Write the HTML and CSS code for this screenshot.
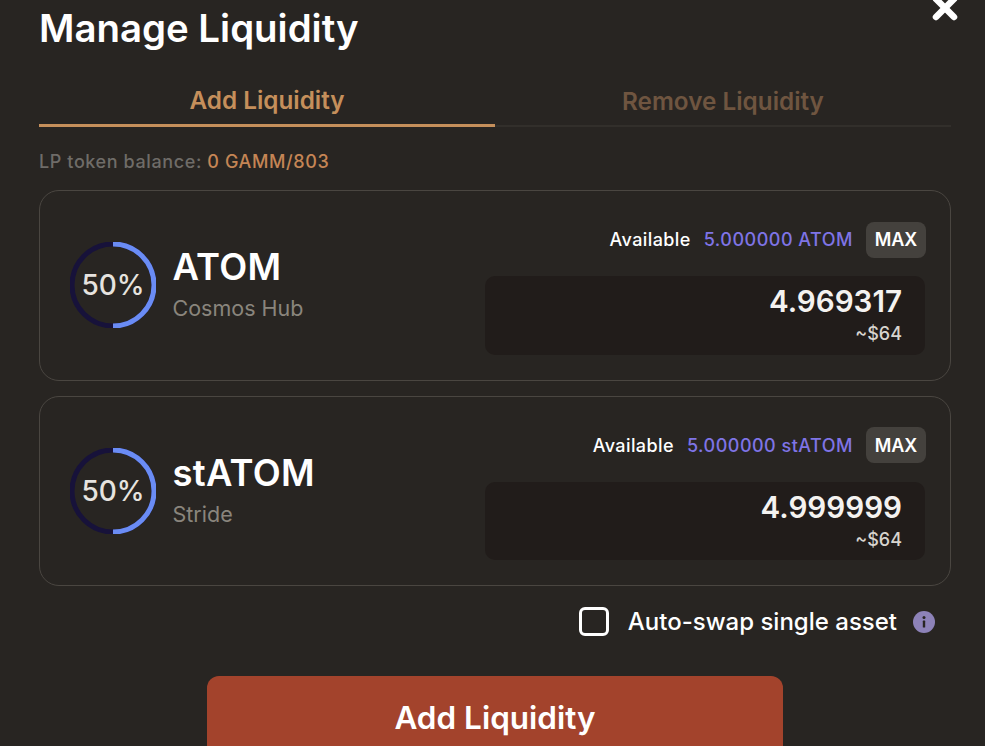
FILE: index.html
```html
<!DOCTYPE html>
<html lang="en">
<head>
<meta charset="utf-8">
<title>Manage Liquidity</title>
<link rel="stylesheet" href="styles.css">
</head>
<body>
<main class="modal">
  <svg class="close" viewBox="0 0 26 26" aria-hidden="true"><path d="M4 4 L22 22 M22 4 L4 22"/></svg>
  <h1 class="title">Manage Liquidity</h1>
  <div class="tabs">
    <div class="tab active">Add Liquidity</div>
    <div class="tab">Remove Liquidity</div>
  </div>
  <p class="balance">LP token balance: <span class="balance-val">0 GAMM/803</span></p>
  <section class="card">
    <div class="asset">
      <div class="ring">
        <svg viewBox="0 0 86 86" aria-hidden="true"><circle class="ring-bg" cx="43" cy="43" r="41"/><path class="ring-fg" d="M43 2 A41 41 0 0 1 43 84"/></svg>
        <span class="pct">50%</span>
      </div>
      <div class="names">
        <div class="sym">ATOM</div>
        <div class="chain">Cosmos Hub</div>
      </div>
    </div>
    <div class="amounts">
      <div class="avail">
        <span class="avail-label">Available</span>
        <span class="avail-val">5.000000 ATOM</span>
        <button class="max">MAX</button>
      </div>
      <div class="input">
        <div class="amount">4.969317</div>
        <div class="usd">~$64</div>
      </div>
    </div>
  </section>
  <section class="card">
    <div class="asset">
      <div class="ring">
        <svg viewBox="0 0 86 86" aria-hidden="true"><circle class="ring-bg" cx="43" cy="43" r="41"/><path class="ring-fg" d="M43 2 A41 41 0 0 1 43 84"/></svg>
        <span class="pct">50%</span>
      </div>
      <div class="names">
        <div class="sym">stATOM</div>
        <div class="chain">Stride</div>
      </div>
    </div>
    <div class="amounts">
      <div class="avail">
        <span class="avail-label">Available</span>
        <span class="avail-val">5.000000 stATOM</span>
        <button class="max">MAX</button>
      </div>
      <div class="input">
        <div class="amount">4.999999</div>
        <div class="usd">~$64</div>
      </div>
    </div>
  </section>
  <div class="autoswap">
    <span class="check"></span>
    <span class="autoswap-label">Auto-swap single asset</span>
    <svg class="info" viewBox="0 0 22 22" aria-hidden="true"><circle cx="11" cy="11" r="11"/><rect class="info-i" x="9.8" y="9.6" width="2.4" height="7" rx="0.6"/><circle class="info-i" cx="11" cy="6.6" r="1.5"/></svg>
  </div>
  <div class="actions"><button class="submit">Add Liquidity</button></div>
</main>
</body>
</html>
```
FILE: styles.css
```css
* { box-sizing: border-box; }
html, body { margin: 0; height: 746px; overflow: hidden; background: #282522; }
body { font-family: "Inter", "Liberation Sans", sans-serif; color: #fff; }
.modal { position: relative; padding: 6px 34px 0 39px; }
.close { position: absolute; top: -5px; left: 932px; width: 26px; height: 26px; }
.close path { fill: none; stroke: #fff; stroke-width: 6.5; stroke-linecap: round; }
.title { margin: 0; font-size: 38.4px; line-height: 44px; font-weight: 600; }
.tabs { display: flex; margin-top: 26px; }
.tab { flex: 1; height: 51px; padding-top: 11px; text-align: center; font-size: 24.3px; line-height: 28px; font-weight: 600; color: #6f5540; border-bottom: 2px solid #322f2b; }
.tab.active { color: #c58f5b; border-bottom: 3px solid #c58f5b; padding-top: 10px; }
.balance { margin: 24px 0 0; font-size: 18px; line-height: 22px; font-weight: 500; color: #6f6c68; letter-spacing: 0.6px; }
.balance-val { color: #c58555; }
.card { display: flex; justify-content: space-between; height: 190.5px; margin-top: 17px; padding: 30.75px 24px 25px 30px; border: 1px solid #4a4641; border-radius: 20px; }
.card + .card { margin-top: 15px; }
.asset { display: flex; align-items: center; gap: 16.5px; height: 126.5px; }
.ring { position: relative; display: flex; align-items: center; justify-content: center; width: 86px; height: 86px; }
.ring svg { position: absolute; inset: 0; width: 86px; height: 86px; }
.ring-bg { fill: none; stroke: #17123a; stroke-width: 5; }
.ring-fg { fill: none; stroke: #6a8cf5; stroke-width: 5; }
.pct { position: relative; font-size: 28px; font-weight: 500; color: #e6e3df; }
.names { margin-top: -1.5px; }
.sym { font-size: 36.4px; line-height: 40px; font-weight: 600; letter-spacing: 0.3px; }
.chain { margin-top: 8px; font-size: 21.5px; line-height: 26px; color: #8a857d; }
.amounts { display: flex; flex-direction: column; width: 441px; }
.avail { display: flex; align-items: center; justify-content: flex-end; height: 36px; font-size: 18px; font-weight: 500; letter-spacing: 0.4px; }
.avail-val { margin-left: 13px; color: #7f74e6; letter-spacing: 0.5px; }
.max { margin-left: 13px; width: 60px; height: 36px; padding: 0; border: 0; border-radius: 8px; background: #44413d; color: #fff; font: 600 18px "Inter", sans-serif; }
.input { margin: 18.25px 1px 0 0; height: 79px; padding: 6px 23px 0; border-radius: 10px; background: #211c1a; text-align: right; }
.amount { font-size: 29.6px; line-height: 38px; font-weight: 600; color: #f4f2f0; }
.usd { margin-top: 3px; font-size: 18px; line-height: 21px; font-weight: 500; color: #d8d4cf; }
.autoswap { display: flex; align-items: center; justify-content: flex-end; height: 36px; margin-top: 17.5px; padding-right: 16px; }
.check { width: 30px; height: 29px; border: 3px solid #fff; border-radius: 6px; }
.autoswap-label { margin-left: 19px; font-size: 24px; line-height: 30px; font-weight: 500; }
.info { margin-left: 16px; width: 22px; height: 22px; fill: #8d82b8; }
.info-i { fill: #282522; }
.actions { display: flex; justify-content: center; margin-top: 36.5px; }
.submit { width: 576px; height: 90px; padding: 0 0 8px; border: 0; border-radius: 12px; background: #a3432c; color: #fff; font: 600 31.5px "Inter", sans-serif; }
```
